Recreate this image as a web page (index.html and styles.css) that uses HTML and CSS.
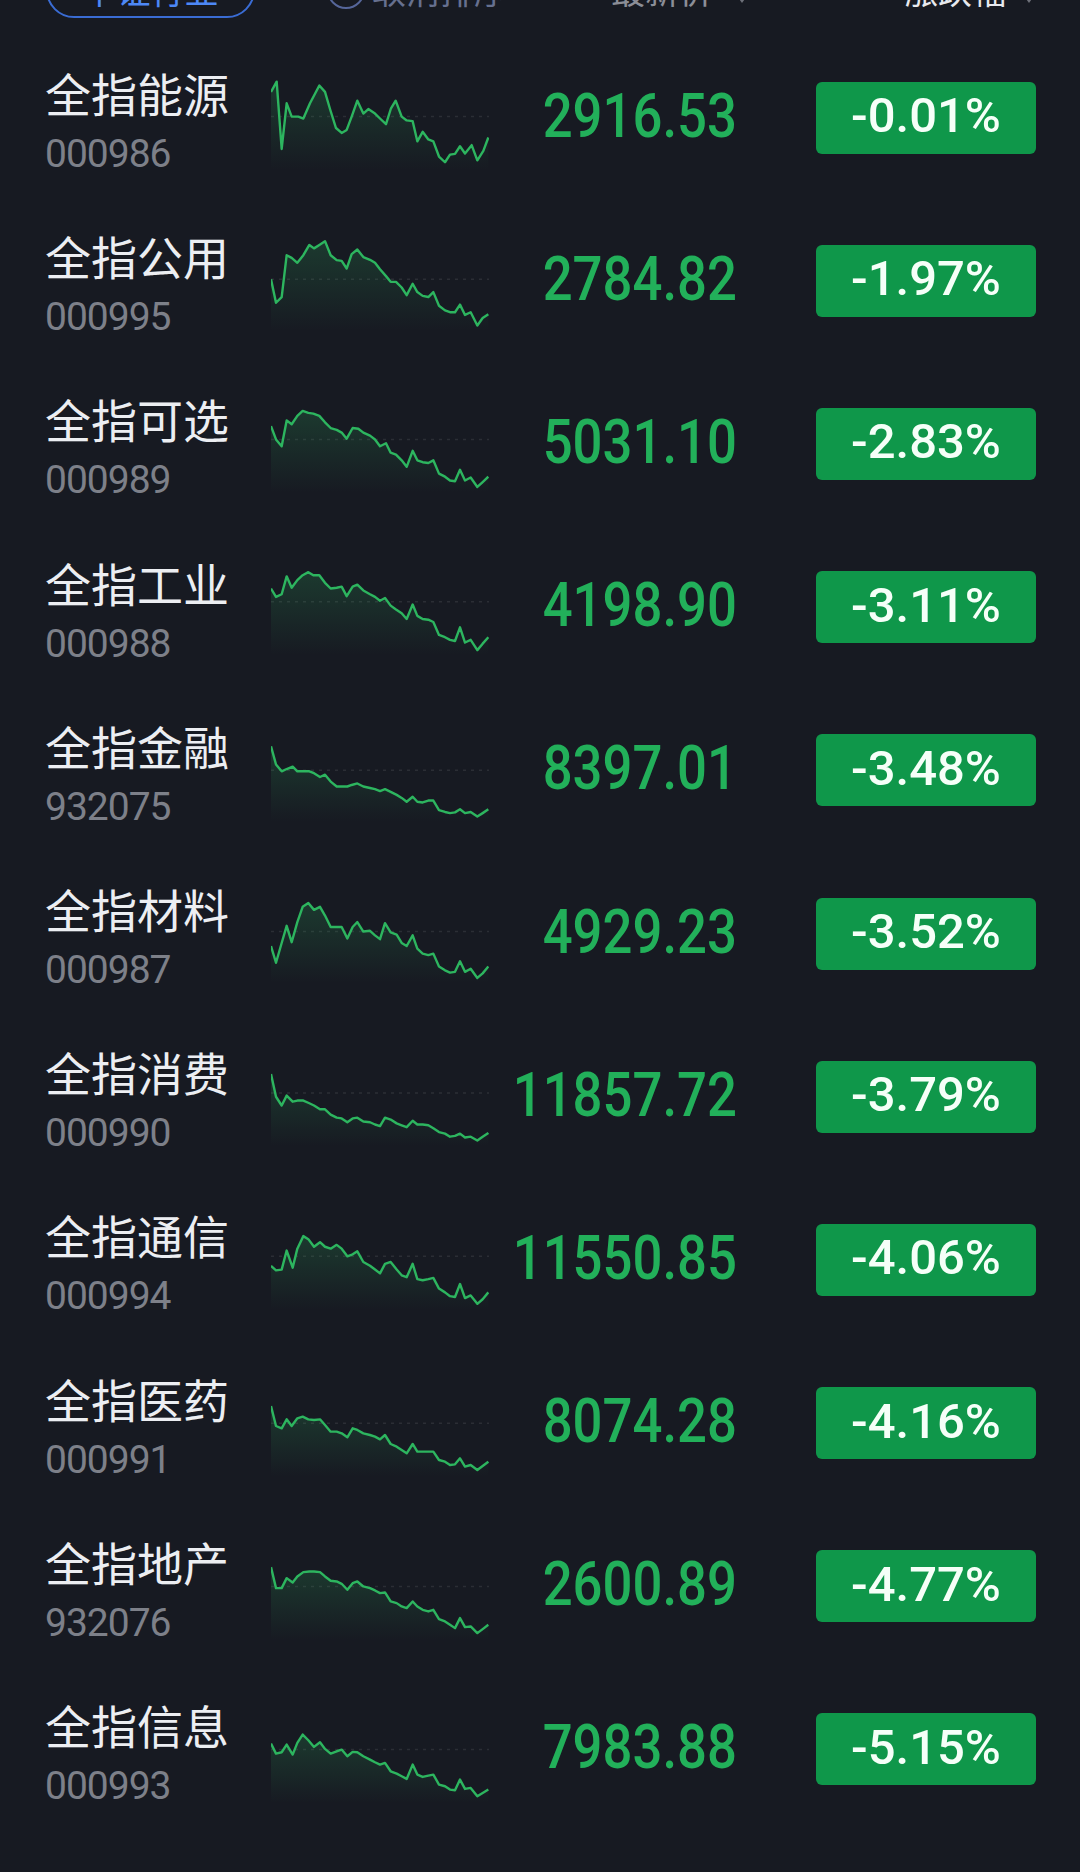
FILE: index.html
```html
<!DOCTYPE html>
<html lang="zh-CN">
<head>
    <meta charset="UTF-8">
    <title>全指行业</title>
    <link rel="stylesheet" href="styles.css">
</head>
<body>

<svg class="defs" width="0" height="0">
    <defs>
        <linearGradient id="fade" x1="0" y1="0" x2="0" y2="1">
            <stop offset="0" stop-color="#2fb862" stop-opacity="0.2"/>
            <stop offset="1" stop-color="#2fb862" stop-opacity="0"/>
        </linearGradient>
    </defs>
</svg>

<div class="toolbar">
    <span class="tab">中证行业</span>
    <span class="check"><i class="circle"></i>取消排序</span>
    <span class="sort price-sort">最新价<i class="caret"></i></span>
    <span class="sort change-sort">涨跌幅<i class="caret"></i></span>
</div>

<div class="list">

    <div class="row">
        <div class="name"><div class="title">全指能源</div><div class="code">000986</div></div>
        <svg class="spark" viewBox="33 -67.3 654 429.2" preserveAspectRatio="none">
            <line class="base" x1="33" y1="150" x2="687" y2="150"/>
            <polygon class="area" points="33,85 50,58 65,235 80,115 95,150 115,150 130,155 150,115 178,68 195,85 210,130 228,180 245,193 260,185 275,150 292,108 310,142 325,130 345,142 360,155 378,170 393,128 407,108 425,150 440,160 458,162 472,215 488,190 505,210 520,215 537,255 555,270 570,250 585,248 600,228 615,247 635,225 652,265 670,240 685,205 685,290 33,290"/>
            <polyline class="line" points="33,85 50,58 65,235 80,115 95,150 115,150 130,155 150,115 178,68 195,85 210,130 228,180 245,193 260,185 275,150 292,108 310,142 325,130 345,142 360,155 378,170 393,128 407,108 425,150 440,160 458,162 472,215 488,190 505,210 520,215 537,255 555,270 570,250 585,248 600,228 615,247 635,225 652,265 670,240 685,205"/>
        </svg>
        <div class="price">2916.53</div>
        <div class="change">-0.01%</div>
    </div>

    <div class="row">
        <div class="name"><div class="title">全指公用</div><div class="code">000995</div></div>
        <svg class="spark" viewBox="33 361.9 654 429.2" preserveAspectRatio="none">
            <line class="base" x1="33" y1="578" x2="687" y2="578"/>
            <polygon class="area" points="33,578 48,640 65,625 80,515 95,522 112,535 130,515 148,488 162,497 178,488 195,478 212,515 230,528 245,530 260,550 275,512 292,500 310,520 330,527 345,535 360,552 378,570 392,585 408,585 425,600 440,620 458,590 472,612 488,622 505,625 520,612 537,648 555,660 570,665 585,665 600,645 615,672 632,665 652,700 668,680 685,670 685,715 33,715"/>
            <polyline class="line" points="33,578 48,640 65,625 80,515 95,522 112,535 130,515 148,488 162,497 178,488 195,478 212,515 230,528 245,530 260,550 275,512 292,500 310,520 330,527 345,535 360,552 378,570 392,585 408,585 425,600 440,620 458,590 472,612 488,622 505,625 520,612 537,648 555,660 570,665 585,665 600,645 615,672 632,665 652,700 668,680 685,670"/>
        </svg>
        <div class="price">2784.82</div>
        <div class="change">-1.97%</div>
    </div>

    <div class="row">
        <div class="name"><div class="title">全指可选</div><div class="code">000989</div></div>
        <svg class="spark" viewBox="33 791.1 654 429.2" preserveAspectRatio="none">
            <line class="base" x1="33" y1="1000" x2="687" y2="1000"/>
            <polygon class="area" points="33,965 48,1000 65,1018 80,950 95,960 112,938 128,925 145,930 160,932 178,938 195,955 212,970 230,975 245,982 260,998 278,970 295,972 310,982 330,990 345,1000 360,1018 378,1010 392,1035 408,1040 425,1055 440,1072 458,1030 472,1055 488,1060 505,1062 520,1055 537,1090 555,1098 570,1108 585,1110 600,1080 615,1108 632,1100 652,1125 668,1112 685,1098 685,1140 33,1140"/>
            <polyline class="line" points="33,965 48,1000 65,1018 80,950 95,960 112,938 128,925 145,930 160,932 178,938 195,955 212,970 230,975 245,982 260,998 278,970 295,972 310,982 330,990 345,1000 360,1018 378,1010 392,1035 408,1040 425,1055 440,1072 458,1030 472,1055 488,1060 505,1062 520,1055 537,1090 555,1098 570,1108 585,1110 600,1080 615,1108 632,1100 652,1125 668,1112 685,1098"/>
        </svg>
        <div class="price">5031.10</div>
        <div class="change">-2.83%</div>
    </div>

    <div class="row">
        <div class="name"><div class="title">全指工业</div><div class="code">000988</div></div>
        <svg class="spark" viewBox="33 1220.3 654 429.2" preserveAspectRatio="none">
            <line class="base" x1="33" y1="1425" x2="687" y2="1425"/>
            <polygon class="area" points="33,1390 48,1412 65,1405 80,1358 95,1388 112,1368 128,1355 145,1347 160,1355 178,1355 195,1375 212,1390 230,1388 245,1385 260,1410 278,1385 292,1380 310,1395 330,1405 345,1412 360,1422 375,1415 392,1435 408,1445 425,1455 440,1470 458,1432 472,1462 488,1470 505,1472 520,1478 537,1512 555,1518 570,1525 585,1528 600,1492 615,1532 632,1525 652,1552 668,1535 685,1518 685,1565 33,1565"/>
            <polyline class="line" points="33,1390 48,1412 65,1405 80,1358 95,1388 112,1368 128,1355 145,1347 160,1355 178,1355 195,1375 212,1390 230,1388 245,1385 260,1410 278,1385 292,1380 310,1395 330,1405 345,1412 360,1422 375,1415 392,1435 408,1445 425,1455 440,1470 458,1432 472,1462 488,1470 505,1472 520,1478 537,1512 555,1518 570,1525 585,1528 600,1492 615,1532 632,1525 652,1552 668,1535 685,1518"/>
        </svg>
        <div class="price">4198.90</div>
        <div class="change">-3.11%</div>
    </div>

    <div class="row">
        <div class="name"><div class="title">全指金融</div><div class="code">932075</div></div>
        <svg class="spark" viewBox="33 -33.7 654 429.2" preserveAspectRatio="none">
            <line class="base" x1="33" y1="185" x2="687" y2="185"/>
            <polygon class="area" points="33,122 48,170 65,188 80,182 98,176 112,188 130,188 148,188 162,193 180,203 195,197 212,215 230,228 245,228 262,228 275,224 292,220 310,228 330,232 345,235 360,240 375,235 392,242 410,250 425,258 440,268 458,255 472,268 488,270 505,265 520,265 537,290 555,295 570,298 585,296 600,288 615,298 632,295 652,307 668,298 685,288 685,320 33,320"/>
            <polyline class="line" points="33,122 48,170 65,188 80,182 98,176 112,188 130,188 148,188 162,193 180,203 195,197 212,215 230,228 245,228 262,228 275,224 292,220 310,228 330,232 345,235 360,240 375,235 392,242 410,250 425,258 440,268 458,255 472,268 488,270 505,265 520,265 537,290 555,295 570,298 585,296 600,288 615,298 632,295 652,307 668,298 685,288"/>
        </svg>
        <div class="price">8397.01</div>
        <div class="change">-3.48%</div>
    </div>

    <div class="row">
        <div class="name"><div class="title">全指材料</div><div class="code">000987</div></div>
        <svg class="spark" viewBox="33 395.5 654 429.2" preserveAspectRatio="none">
            <line class="base" x1="33" y1="610" x2="687" y2="610"/>
            <polygon class="area" points="33,648 48,692 65,640 80,595 95,638 112,585 128,545 145,535 162,553 180,545 195,568 212,598 230,598 245,598 262,628 278,598 292,585 310,610 330,608 345,620 360,630 375,588 392,612 410,618 425,640 440,648 458,620 472,655 488,668 505,672 520,668 537,702 555,712 570,718 585,716 600,688 615,716 632,708 652,732 668,720 685,702 685,745 33,745"/>
            <polyline class="line" points="33,648 48,692 65,640 80,595 95,638 112,585 128,545 145,535 162,553 180,545 195,568 212,598 230,598 245,598 262,628 278,598 292,585 310,610 330,608 345,620 360,630 375,588 392,612 410,618 425,640 440,648 458,620 472,655 488,668 505,672 520,668 537,702 555,712 570,718 585,716 600,688 615,716 632,708 652,732 668,720 685,702"/>
        </svg>
        <div class="price">4929.23</div>
        <div class="change">-3.52%</div>
    </div>

    <div class="row">
        <div class="name"><div class="title">全指消费</div><div class="code">000990</div></div>
        <svg class="spark" viewBox="33 824.7 654 429.2" preserveAspectRatio="none">
            <line class="base" x1="33" y1="1035" x2="687" y2="1035"/>
            <polygon class="area" points="33,985 48,1045 65,1068 80,1042 98,1058 112,1055 130,1055 148,1062 162,1068 180,1078 195,1078 212,1092 230,1100 245,1102 262,1112 278,1102 292,1100 310,1110 330,1112 345,1118 360,1122 375,1100 392,1105 410,1115 425,1120 440,1125 458,1108 472,1118 488,1118 505,1120 520,1128 537,1138 555,1142 570,1150 585,1148 600,1142 615,1152 632,1150 652,1160 668,1150 685,1140 685,1175 33,1175"/>
            <polyline class="line" points="33,985 48,1045 65,1068 80,1042 98,1058 112,1055 130,1055 148,1062 162,1068 180,1078 195,1078 212,1092 230,1100 245,1102 262,1112 278,1102 292,1100 310,1110 330,1112 345,1118 360,1122 375,1100 392,1105 410,1115 425,1120 440,1125 458,1108 472,1118 488,1118 505,1120 520,1128 537,1138 555,1142 570,1150 585,1148 600,1142 615,1152 632,1150 652,1160 668,1150 685,1140"/>
        </svg>
        <div class="price">11857.72</div>
        <div class="change">-3.79%</div>
    </div>

    <div class="row">
        <div class="name"><div class="title">全指通信</div><div class="code">000994</div></div>
        <svg class="spark" viewBox="33 1253.9 654 429.2" preserveAspectRatio="none">
            <line class="base" x1="33" y1="1465" x2="687" y2="1465"/>
            <polygon class="area" points="33,1490 48,1502 65,1500 80,1450 98,1495 112,1445 130,1412 145,1420 162,1440 180,1428 195,1440 212,1445 230,1435 245,1445 262,1465 278,1460 292,1452 310,1480 330,1490 345,1500 360,1510 375,1485 392,1480 410,1500 425,1515 440,1520 458,1485 472,1525 488,1528 505,1525 520,1522 537,1550 555,1560 570,1570 585,1572 600,1538 615,1575 632,1568 652,1590 668,1578 685,1560 685,1605 33,1605"/>
            <polyline class="line" points="33,1490 48,1502 65,1500 80,1450 98,1495 112,1445 130,1412 145,1420 162,1440 180,1428 195,1440 212,1445 230,1435 245,1445 262,1465 278,1460 292,1452 310,1480 330,1490 345,1500 360,1510 375,1485 392,1480 410,1500 425,1515 440,1520 458,1485 472,1525 488,1528 505,1525 520,1522 537,1550 555,1560 570,1570 585,1572 600,1538 615,1575 632,1568 652,1590 668,1578 685,1560"/>
        </svg>
        <div class="price">11550.85</div>
        <div class="change">-4.06%</div>
    </div>

    <div class="row">
        <div class="name"><div class="title">全指医药</div><div class="code">000991</div></div>
        <svg class="spark" viewBox="33 60 654 489.6" preserveAspectRatio="none">
            <line class="base" x1="33" y1="310" x2="687" y2="310"/>
            <polygon class="area" points="33,258 48,318 65,325 80,298 95,318 112,295 128,290 145,298 162,300 180,298 195,315 212,335 230,335 245,340 262,352 278,325 292,330 310,340 330,345 345,350 360,358 375,345 392,372 410,380 425,390 440,400 458,372 472,395 488,395 505,395 520,395 537,420 555,425 570,435 585,433 600,415 615,440 632,435 652,450 668,438 685,425 685,470 33,470"/>
            <polyline class="line" points="33,258 48,318 65,325 80,298 95,318 112,295 128,290 145,298 162,300 180,298 195,315 212,335 230,335 245,340 262,352 278,325 292,330 310,340 330,345 345,350 360,358 375,345 392,372 410,380 425,390 440,400 458,372 472,395 488,395 505,395 520,395 537,420 555,425 570,435 585,433 600,415 615,440 632,435 652,450 668,438 685,425"/>
        </svg>
        <div class="price">8074.28</div>
        <div class="change">-4.16%</div>
    </div>

    <div class="row">
        <div class="name"><div class="title">全指地产</div><div class="code">932076</div></div>
        <svg class="spark" viewBox="33 549.6 654 489.6" preserveAspectRatio="none">
            <line class="base" x1="33" y1="800" x2="687" y2="800"/>
            <polygon class="area" points="33,742 48,805 65,805 80,775 98,788 112,770 130,757 148,755 162,755 180,757 195,770 212,783 230,785 245,792 262,810 278,790 292,785 310,800 330,805 345,812 360,820 375,818 392,845 410,850 425,860 440,865 458,845 472,860 488,870 505,875 520,870 537,898 555,905 570,915 585,925 600,895 615,922 632,920 652,940 668,928 685,915 685,960 33,960"/>
            <polyline class="line" points="33,742 48,805 65,805 80,775 98,788 112,770 130,757 148,755 162,755 180,757 195,770 212,783 230,785 245,792 262,810 278,790 292,785 310,800 330,805 345,812 360,820 375,818 392,845 410,850 425,860 440,865 458,845 472,860 488,870 505,875 520,870 537,898 555,905 570,915 585,925 600,895 615,922 632,920 652,940 668,928 685,915"/>
        </svg>
        <div class="price">2600.89</div>
        <div class="change">-4.77%</div>
    </div>

    <div class="row">
        <div class="name"><div class="title">全指信息</div><div class="code">000993</div></div>
        <svg class="spark" viewBox="33 1039.2 654 489.6" preserveAspectRatio="none">
            <line class="base" x1="33" y1="1290" x2="687" y2="1290"/>
            <polygon class="area" points="33,1272 48,1302 65,1298 80,1275 98,1305 112,1270 128,1245 145,1262 162,1282 180,1268 195,1288 212,1302 230,1295 245,1290 262,1310 278,1297 292,1298 310,1310 330,1320 345,1328 360,1335 375,1330 392,1355 410,1362 425,1370 440,1378 458,1335 472,1365 488,1372 505,1368 520,1365 537,1395 555,1400 570,1410 585,1412 600,1380 615,1408 632,1405 652,1430 668,1420 685,1410 685,1450 33,1450"/>
            <polyline class="line" points="33,1272 48,1302 65,1298 80,1275 98,1305 112,1270 128,1245 145,1262 162,1282 180,1268 195,1288 212,1302 230,1295 245,1290 262,1310 278,1297 292,1298 310,1310 330,1320 345,1328 360,1335 375,1330 392,1355 410,1362 425,1370 440,1378 458,1335 472,1365 488,1372 505,1368 520,1365 537,1395 555,1400 570,1410 585,1412 600,1380 615,1408 632,1405 652,1430 668,1420 685,1410"/>
        </svg>
        <div class="price">7983.88</div>
        <div class="change">-5.15%</div>
    </div>

</div>

</body>
</html>
```

FILE: styles.css
```css
body {
    margin: 0;
    background-color: #171a22;
    font-family: "Noto Sans CJK SC", "Noto Sans", sans-serif;
    overflow: hidden;
}
.defs {
    display: block;
    width: 0;
    height: 0;
}

/* header strip, mostly scrolled out of view */
.toolbar {
    display: flex;
    align-items: center;
    height: 56px;
    margin-top: -38px;
    margin-bottom: 16px;
    padding-left: 46px;
    font-size: 34px;
    line-height: 40px;
}
.tab {
    display: flex;
    align-items: center;
    justify-content: center;
    box-sizing: border-box;
    width: 209px;
    height: 56px;
    border: 2px solid #3a6cd4;
    border-radius: 28px;
    color: #4d88f6;
}
.check {
    display: flex;
    align-items: center;
    gap: 7px;
    margin-left: 72px;
    color: #66708f;
}
.circle {
    box-sizing: border-box;
    width: 38px;
    height: 38px;
    border: 2px solid #56669a;
    border-radius: 50%;
}
.sort {
    display: flex;
    align-items: center;
    color: #8b8e97;
}
.price-sort {
    margin-left: 103px;
}
.change-sort {
    margin-left: 157px;
    color: #e7e9ee;
}
.caret {
    width: 0;
    height: 0;
    margin-left: 24px;
    margin-top: 18px;
    border-left: 5px solid transparent;
    border-right: 5px solid transparent;
    border-top: 7px solid #6e717a;
}
.change-sort .caret {
    margin-left: 18px;
}

/* rows */
.row {
    display: flex;
    align-items: center;
    height: 163.2px;
    padding-left: 45px;
}
.name {
    flex: 0 0 226px;
    padding-top: 10px;
}
.title {
    font-size: 46px;
    line-height: 50px;
    color: #eceef2;
}
.code {
    margin-top: 17px;
    font-family: Roboto, sans-serif;
    font-size: 39px;
    line-height: 40px;
    letter-spacing: -1px;
    color: #7d8089;
}
.spark {
    flex: 0 0 218px;
    width: 218px;
    height: 100%;
}
.spark .line {
    fill: none;
    stroke: #2db55f;
    stroke-width: 2.4px;
    stroke-linejoin: round;
    vector-effect: non-scaling-stroke;
}
.spark .area {
    fill: url(#fade);
    stroke: none;
}
.spark .base {
    stroke: rgba(255, 255, 255, 0.09);
    stroke-width: 1.5px;
    stroke-dasharray: 3 5;
    vector-effect: non-scaling-stroke;
}
.price {
    display: flex;
    justify-content: flex-end;
    flex: 0 0 248px;
    min-width: 0;
    white-space: nowrap;
    font-family: Roboto, sans-serif;
    font-weight: 500;
    font-size: 62px;
    line-height: 62px;
    color: #22b05a;
    transform: scaleX(0.85);
    transform-origin: right center;
}
.change {
    display: flex;
    align-items: center;
    justify-content: center;
    box-sizing: border-box;
    width: 220px;
    height: 72px;
    margin-left: 79px;
    margin-top: 4px;
    padding-bottom: 4px;
    border-radius: 6px;
    background-color: #0f974a;
    font-family: Roboto, sans-serif;
    font-weight: 500;
    font-size: 49px;
    color: #f5fff8;
}
```
